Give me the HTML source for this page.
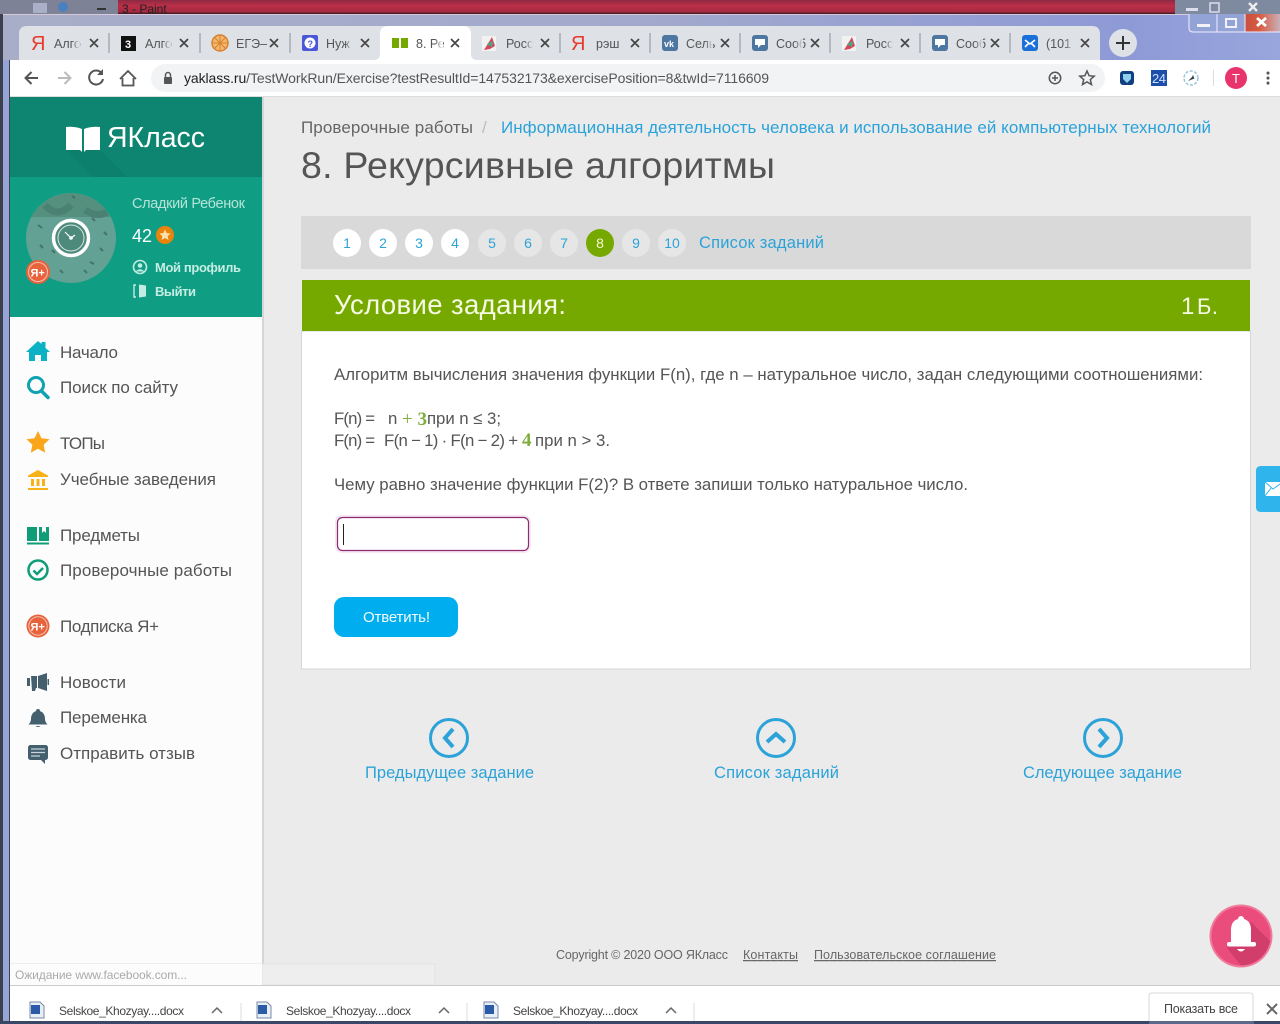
<!DOCTYPE html>
<html lang="ru"><head><meta charset="utf-8"><title>8. Рекурсивные алгоритмы</title>
<style>
html,body{margin:0;padding:0;width:1280px;height:1024px;overflow:hidden;background:#ebebeb}
svg{display:block}
text{font-family:"Liberation Sans","Noto Sans CJK JP",sans-serif}
.side{font-size:17px;fill:#555}
.body{font-size:16.800px;fill:#555}
.lnk{fill:#2ba3d9}
.tab{font-size:12.500px;fill:#555}
.x{stroke:#444;stroke-width:1.7;fill:none}
.step{font-size:14px;fill:#2ba3d9;text-anchor:middle}
.dl{font-size:12px;fill:#444}
</style></head><body>
<svg width="1280" height="1024" viewBox="0 0 1280 1024" xmlns="http://www.w3.org/2000/svg">
<defs>
<linearGradient id="top" x1="0" y1="0" x2="0" y2="1"><stop offset="0" stop-color="#8c2a42"/><stop offset=".4" stop-color="#bb2f48"/><stop offset=".85" stop-color="#a52a40"/><stop offset="1" stop-color="#2a1a20"/></linearGradient>
<linearGradient id="frame" x1="0" y1="0" x2="1" y2="0"><stop offset="0" stop-color="#a8aec8"/><stop offset=".5" stop-color="#a3a9cc"/><stop offset=".88" stop-color="#8e9ad6"/><stop offset="1" stop-color="#98a6dc"/></linearGradient>
<linearGradient id="red" x1="0" y1="0" x2="1" y2="0"><stop offset="0" stop-color="#c85040"/><stop offset=".4" stop-color="#d85a40"/><stop offset="1" stop-color="#c8b0b8"/></linearGradient>
<linearGradient id="fg" x1="0" y1="0" x2="1" y2="0"><stop offset="0" stop-color="#dee1e6" stop-opacity="0"/><stop offset="1" stop-color="#dee1e6"/></linearGradient>
<linearGradient id="fw" x1="0" y1="0" x2="1" y2="0"><stop offset="0" stop-color="#fff" stop-opacity="0"/><stop offset="1" stop-color="#fff"/></linearGradient>
<clipPath id="av"><circle cx="71" cy="238" r="45"/></clipPath>
<clipPath id="bb"><circle cx="1241" cy="936" r="29.500"/></clipPath>
</defs>

<!-- desktop strip -->
<rect width="1280" height="14" fill="url(#top)"/>
<rect width="118" height="14" fill="#7d8296"/>
<rect x="1175" width="105" height="14" fill="#7d8aa0"/>
<rect x="33" y="3" width="14" height="10" fill="#aab0c8"/>
<circle cx="63" cy="7" r="5" fill="#4a7fc0"/>
<rect x="97" y="8" width="9" height="2" fill="#333"/>
<text x="122" y="13" font-size="12" fill="#222">3 - Paint</text>
<rect x="1186" y="8" width="12" height="3" fill="#dde"/>
<rect x="1210" y="3" width="9" height="9" fill="none" stroke="#dde" stroke-width="1.5"/>
<path d="M1249 3l8 8M1257 3l-8 8" stroke="#eee" stroke-width="2.4"/>

<!-- window frame -->
<rect x="0" y="14" width="3" height="1010" fill="#3c3f4c"/>
<rect x="3" y="14" width="1277" height="46" fill="url(#frame)"/>
<rect x="3" y="14" width="1277" height="1" fill="#d8c8d8"/>
<rect x="3" y="60" width="7" height="964" fill="#97a5d6"/>
<rect x="9" y="60" width="1" height="964" fill="#3e4250"/>

<!-- window buttons -->
<rect x="1189" y="14" width="91" height="18" fill="#94a3d6"/>
<rect x="1245" y="14" width="35" height="18" fill="url(#red)"/>
<path d="M1189 14v14q0 4 4 4h87M1217 14v18M1245 14v18" stroke="#eef" stroke-width="1" fill="none"/>
<rect x="1197" y="24" width="13" height="3" fill="#f0f2f8"/>
<rect x="1226" y="19" width="10" height="8" fill="none" stroke="#f0f2f8" stroke-width="2"/>
<path d="M1257 18l9 8M1266 18l-9 8" stroke="#fff" stroke-width="2.8"/>

<!-- tabs -->
<path d="M19 60V34q0-8 8-8h1065q8 0 8 8v26z" fill="#dee1e6"/>
<path d="M109 33v20M200 33v20M290 33v20M560 33v20M650 33v20M740 33v20M830 33v20M920 33v20M1010 33v20" stroke="#8a8f98" stroke-width="1"/>
<path d="M374 60q6 0 6-6V34q0-8 8-8h75q8 0 8 8v20q0 6 6 6z" fill="#fff"/>
<circle cx="1123" cy="43" r="14" fill="#dee1e6"/>
<path d="M1123 36v14M1116 43h14" stroke="#333" stroke-width="2"/>

<!-- tab icons -->
<text x="31" y="50" font-size="20" fill="#e8392a">Я</text>
<rect x="121" y="36" width="15" height="15" fill="#111"/><text x="125" y="48" font-size="11" font-weight="bold" fill="#fff">3</text>
<circle cx="220" cy="43" r="8" fill="#f2b872" stroke="#d9822b" stroke-width="1.5"/><path d="M220 35v16M212 43h16M214 37l12 12M226 37l-12 12" stroke="#d9822b" stroke-width="1"/>
<rect x="302" y="35" width="16" height="16" rx="2" fill="#4b56d8"/><circle cx="310" cy="43" r="5.5" fill="#fff"/><text x="307.500" y="47" font-size="9" font-weight="bold" fill="#4b56d8">?</text>
<path d="M392 38h7v10h-7zM401 38h7v10h-7z" fill="#76a900"/>
<path d="M482 36h14v15h-14z" fill="#f2f2f2"/><path d="M484 50l8-13 3 9-5 3z" fill="#d24a5a"/><path d="M487 44l6-3-1 6z" fill="#4aa884"/>
<text x="571" y="50" font-size="20" fill="#e8392a">Я</text>
<rect x="662" y="35" width="16" height="16" rx="3" fill="#4d76a1"/><text x="664" y="47" font-size="9" font-weight="bold" fill="#fff">vk</text>
<rect x="752" y="35" width="16" height="16" rx="3" fill="#4d76a1"/><path d="M755 39h10v6h-4l-3 3v-3h-3z" fill="#fff"/>
<path d="M842 36h14v15h-14z" fill="#f2f2f2"/><path d="M844 50l8-13 3 9-5 3z" fill="#d24a5a"/><path d="M847 44l6-3-1 6z" fill="#4aa884"/>
<rect x="932" y="35" width="16" height="16" rx="3" fill="#4d76a1"/><path d="M935 39h10v6h-4l-3 3v-3h-3z" fill="#fff"/>
<rect x="1022" y="35" width="16" height="16" rx="3" fill="#1a6fd8"/><path d="M1025 40l5 4 5-4M1025 47l4-4M1035 47l-4-4" stroke="#fff" stroke-width="1.6" fill="none"/>

<!-- tab labels -->
<text class="tab" x="54" y="48">Алго</text>
<text class="tab" x="145" y="48">Алго</text>
<text class="tab" x="236" y="48">ЕГЭ–</text>
<text class="tab" x="326" y="48">Нуж</text>
<text class="tab" x="416" y="48">8. Ре</text>
<text class="tab" x="506" y="48">Росс</text>
<text class="tab" x="596" y="48">рэш</text>
<text class="tab" x="686" y="48">Сель</text>
<text class="tab" x="776" y="48">Сооб</text>
<text class="tab" x="866" y="48">Росс</text>
<text class="tab" x="956" y="48">Сооб</text>
<text class="tab" x="1046" y="48">(101</text>
<rect x="72" y="34" width="8" height="20" fill="url(#fg)"/>
<rect x="163" y="34" width="8" height="20" fill="url(#fg)"/>
<rect x="345" y="34" width="8" height="20" fill="url(#fg)"/>
<rect x="435" y="34" width="8" height="20" fill="url(#fw)"/>
<rect x="525" y="34" width="8" height="20" fill="url(#fg)"/>
<rect x="705" y="34" width="8" height="20" fill="url(#fg)"/>
<rect x="795" y="34" width="8" height="20" fill="url(#fg)"/>
<rect x="885" y="34" width="8" height="20" fill="url(#fg)"/>
<rect x="975" y="34" width="8" height="20" fill="url(#fg)"/>
<rect x="1065" y="34" width="8" height="20" fill="url(#fg)"/>
<path class="x" d="M90 39l8 8M98 39l-8 8M180 39l8 8M188 39l-8 8M270 39l8 8M278 39l-8 8M361 39l8 8M369 39l-8 8M451 39l8 8M459 39l-8 8M541 39l8 8M549 39l-8 8M631 39l8 8M639 39l-8 8M721 39l8 8M729 39l-8 8M811 39l8 8M819 39l-8 8M901 39l8 8M909 39l-8 8M991 39l8 8M999 39l-8 8M1081 39l8 8M1089 39l-8 8"/>

<!-- toolbar -->
<rect x="10" y="60" width="1270" height="37" fill="#fff"/>
<rect x="10" y="96" width="1270" height="1" fill="#ddd"/>
<path d="M38 78H26M31.500 72l-6 6 6 6" stroke="#555" stroke-width="2" fill="none"/>
<path d="M70 78H58M63.500 72l-6 6 6 6" stroke="#bbb" stroke-width="2" fill="none" transform="rotate(180 64 78)"/>
<path d="M101.500 73a7 7 0 1 0 1.500 6" stroke="#555" stroke-width="2" fill="none"/><path d="M103 69v6h-6z" fill="#555"/>
<path d="M120 79l8-8 8 8M122.500 78v7.500h11V78" stroke="#555" stroke-width="1.800" fill="none"/>
<rect x="151" y="64" width="954" height="28" rx="14" fill="#f1f3f4"/>
<rect x="164" y="77" width="8" height="7" rx="1" fill="#555"/><path d="M165.500 77v-2a2.500 2.500 0 0 1 5 0v2" stroke="#555" stroke-width="1.400" fill="none"/>
<text x="184" y="83" font-size="14" fill="#555" textLength="585"><tspan fill="#222">yaklass.ru</tspan>/TestWorkRun/Exercise?testResultId=147532173&amp;exercisePosition=8&amp;twId=7116609</text>
<circle cx="1055" cy="78" r="5.700" stroke="#555" stroke-width="1.500" fill="none"/><path d="M1055 75v6M1052 78h6" stroke="#555" stroke-width="1.500"/>
<path d="M1087 71l2.100 4.700 5.100.5-3.900 3.400 1.200 5-4.500-2.700-4.500 2.700 1.200-5-3.900-3.400 5.100-.5z" stroke="#555" stroke-width="1.500" fill="none"/>
<rect x="1120" y="71" width="14" height="14" rx="3" fill="#123f80"/><path d="M1123 74h8v5l-4 4-4-4z" fill="#8fd0f0"/>
<rect x="1151" y="70" width="16" height="16" fill="#1b4faa"/><text x="1152" y="83" font-size="13" fill="#cfe0ff" textLength="14">24</text>
<circle cx="1191" cy="78" r="7" stroke="#9cc4dc" stroke-width="1.500" stroke-dasharray="3 1.500" fill="none"/><path d="M1188 81l4-4 1-2 1.500 3.500z" fill="#345"/>
<rect x="1213" y="70" width="1" height="16" fill="#ddd"/>
<circle cx="1236" cy="78" r="11" fill="#e8336d"/><text x="1236" y="83" font-size="13" fill="#fff" text-anchor="middle">T</text>
<path d="M1268 73v.1M1268 78v.1M1268 83v.1" stroke="#555" stroke-width="3" stroke-linecap="round"/>

<!-- page -->
<rect x="10" y="97" width="1270" height="888" fill="#ebebeb"/>
<rect x="10" y="97" width="252" height="888" fill="#fcfcfd"/>
<rect x="262" y="97" width="2" height="888" fill="#d6d6d6"/>
<rect x="10" y="97" width="252" height="80" fill="#0e8571"/>
<path d="M66 150h34l27 27H93z" fill="#0c7a68" opacity=".45"/>
<rect x="10" y="177" width="252" height="140" fill="#0f9e84"/>

<!-- logo -->
<path d="M66 127q9-1 16 2v23l-2-2H66zM100 127q-9-1-16 2v23l2-2h14z" fill="#fff"/>
<text x="107" y="147" font-size="28.500" fill="#fff" textLength="98">ЯКласс</text>

<!-- avatar -->
<circle cx="71" cy="238" r="45" fill="#62a193"/>
<g clip-path="url(#av)">
<rect x="26" y="193" width="90" height="24" fill="#55907f"/>
<path d="M45 205q12 14 26 0M85 210q12 8 22 2" stroke="#4a8172" stroke-width="7" fill="none"/>
<path d="M38 225l4 3M52 250l3 3M92 218l3 3M100 248l3 3M84 270l3 3M60 270l3 3M40 245l3 3M104 232l3 3M90 262l4 2M72 196l3 2" stroke="#3f6a60" stroke-width="2" opacity=".8"/>
</g>
<circle cx="71" cy="238" r="17.500" fill="#4e8a7c" stroke="#fff" stroke-width="3.500"/>
<circle cx="71" cy="238" r="13" fill="none" stroke="#d6e8e2" stroke-width="1"/>
<path d="M71 238l-6-6M71 238l4-3" stroke="#fff" stroke-width="1.200"/><circle cx="71" cy="238" r="1.800" fill="#fff"/>
<circle cx="38" cy="272" r="12" fill="#e8623c"/><circle cx="38" cy="272" r="9.500" fill="none" stroke="#f4c0ac" stroke-width="1"/>
<text x="30.500" y="276.500" font-size="11" font-weight="bold" fill="#fff">Я+</text>

<text x="132" y="208" font-size="14.500" fill="#b5e3d8" textLength="113">Сладкий Ребенок</text>
<text x="132" y="242" font-size="18" fill="#fff" textLength="20">42</text>
<circle cx="165" cy="235" r="9" fill="#e8830c"/>
<path d="M165 229.500l1.700 3.600 3.900.4-2.900 2.600.8 3.900-3.500-2-3.500 2 .8-3.900-2.900-2.600 3.900-.4z" fill="#fde0a8"/>
<circle cx="140" cy="267" r="6.500" fill="none" stroke="#c4ece2" stroke-width="1.600"/><circle cx="140" cy="265.500" r="2.300" fill="#c4ece2"/><path d="M135.500 271.500q4.500-4.500 9 0z" fill="#c4ece2"/>
<path d="M136 285h-2v12h2" stroke="#c4ece2" stroke-width="1.400" fill="none"/><path d="M139 284.500l7 1v11l-7 1z" fill="#c4ece2"/>
<text x="155" y="272" font-size="13" font-weight="bold" fill="#c4ece2" textLength="86">Мой профиль</text>
<text x="155" y="296" font-size="13" font-weight="bold" fill="#c4ece2" textLength="41">Выйти</text>

<!-- sidebar icons -->
<path d="M26 352l12-11 3.500 3v-2h4v6l4.500 4h-3v9h-6v-6h-6v6h-6v-9z" fill="#0cb2c4"/>
<circle cx="36" cy="385" r="7.500" fill="none" stroke="#0fa2b0" stroke-width="3"/><path d="M41.500 391l6.500 6.500" stroke="#0fa2b0" stroke-width="3.500" stroke-linecap="round"/>
<path d="M38 431l3.500 7.300 8 1-5.900 5.500 1.600 8-7.200-4-7.200 4 1.600-8-5.900-5.500 8-1z" fill="#faa61a"/>
<path d="M28 475.500l10-5.500 10 5.500v1.500H28zM31 479h3v7h-3zM36.500 479h3v7h-3zM42 479h3v7h-3zM28 488h20v2H28z" fill="#f7b21a"/>
<path d="M27 527h10v14h-10zM39 527h3v6l2-2 2 2v-6h3v14H39z" fill="#0f9d78"/><path d="M27 542.500h22v2H27z" fill="#0f9d78"/>
<circle cx="38" cy="570" r="9.500" fill="none" stroke="#0f9d78" stroke-width="2.500"/><path d="M33.500 570.500l3.500 3.500 6-6" stroke="#0f9d78" stroke-width="2.500" fill="none"/>
<circle cx="38" cy="626" r="11.500" fill="#e8623c"/><circle cx="38" cy="626" r="9.200" fill="none" stroke="#f4c0ac" stroke-width="1"/>
<text x="30.500" y="630.500" font-size="11" font-weight="bold" fill="#fff">Я+</text>
<path d="M27 678h3v8h-3zM31 676h6v12h-1l-1 3h-3zM38 676l9-3v18l-9-3zM47.500 679h1.500v6h-1.500z" fill="#44606f"/>
<path d="M38 709a2 2 0 0 1 2 2q5 2 5 8 0 3 2.500 5.500H28.500Q31 722 31 719q0-6 5-8a2 2 0 0 1 2-2zM35.500 726h5q-2.500 2-5 0z" fill="#44606f"/>
<rect x="28" y="745" width="20" height="15" rx="2.500" fill="#44606f"/><path d="M41 760h4v4z" fill="#44606f"/><path d="M31 749h14M31 752.500h14M31 756h9" stroke="#c8d2d8" stroke-width="1.200"/>

<!-- sidebar labels -->
<text class="side" x="60" y="358" textLength="58">Начало</text>
<text class="side" x="60" y="393" textLength="118">Поиск по сайту</text>
<text class="side" x="60" y="449" textLength="45">ТОПы</text>
<text class="side" x="60" y="485" textLength="156">Учебные заведения</text>
<text class="side" x="60" y="541" textLength="80">Предметы</text>
<text class="side" x="60" y="576" textLength="172">Проверочные работы</text>
<text class="side" x="60" y="632" textLength="99">Подписка Я+</text>
<text class="side" x="60" y="688" textLength="66">Новости</text>
<text class="side" x="60" y="723" textLength="87">Переменка</text>
<text class="side" x="60" y="759" textLength="135">Отправить отзыв</text>

<!-- heading -->
<text x="301" y="133" font-size="17" fill="#666" textLength="172">Проверочные работы</text>
<text x="482" y="133" font-size="17" fill="#bbb">/</text>
<text class="lnk" x="501" y="133" font-size="17" textLength="710">Информационная деятельность человека и использование ей компьютерных технологий</text>
<text x="301" y="178" font-size="37.500" fill="#555" textLength="474">8. Рекурсивные алгоритмы</text>

<!-- stepper -->
<rect x="301" y="216" width="950" height="53" fill="#d9d9d9"/>
<g fill="#fff"><circle cx="347" cy="243" r="14"/><circle cx="383" cy="243" r="14"/><circle cx="419" cy="243" r="14"/><circle cx="455" cy="243" r="14"/></g>
<g fill="#e6e6e6"><circle cx="492" cy="243" r="14"/><circle cx="528" cy="243" r="14"/><circle cx="564" cy="243" r="14"/><circle cx="636" cy="243" r="14"/><circle cx="672" cy="243" r="14"/></g>
<circle cx="600" cy="243" r="14" fill="#76a900"/>
<text class="step" x="347" y="248">1</text><text class="step" x="383" y="248">2</text><text class="step" x="419" y="248">3</text><text class="step" x="455" y="248">4</text><text class="step" x="492" y="248">5</text><text class="step" x="528" y="248">6</text><text class="step" x="564" y="248">7</text>
<text class="step" x="600" y="248" style="fill:#f4f8d0">8</text>
<text class="step" x="636" y="248">9</text><text class="step" x="672" y="248">10</text>
<text class="lnk" x="699" y="248" font-size="16.500" textLength="125">Список заданий</text>

<!-- panel -->
<rect x="301.500" y="331" width="949" height="338" fill="#fff" stroke="#d6d6d6"/>
<rect x="302" y="280" width="948" height="51" fill="#76a900"/>
<text x="334" y="314" font-size="27.500" fill="#f6fae4" textLength="232">Условие задания:</text>
<text x="1181" y="314" font-size="24" fill="#f6fae4">1</text>
<text x="1197" y="314" font-size="22" fill="#f6fae4" textLength="21">Б.</text>

<text class="body" x="334" y="380" textLength="869">Алгоритм вычисления значения функции F(n), где n – натуральное число, задан следующими соотношениями:</text>
<text class="body" x="334" y="424" textLength="41">F(n) =</text>
<text class="body" x="388" y="424">n</text>
<text x="402" y="425" font-size="19" fill="#7cae3c" style="font-family:'Liberation Serif',serif" textLength="25"><tspan>+</tspan><tspan font-weight="bold">3</tspan></text>
<text class="body" x="427" y="424" textLength="74">при n ≤ 3;</text>
<text class="body" x="334" y="446" textLength="41">F(n) =</text>
<text class="body" x="384" y="446" textLength="134">F(n − 1) · F(n − 2) +</text>
<text x="522" y="446" font-size="19" font-weight="bold" fill="#7cae3c" style="font-family:'Liberation Serif',serif">4</text>
<text class="body" x="535" y="446" textLength="75">при n &gt; 3.</text>
<text class="body" x="334" y="490" textLength="634">Чему равно значение функции F(2)? В ответе запиши только натуральное число.</text>

<rect x="336" y="516" width="194" height="36" rx="6" fill="none" stroke="#f7e8f3" stroke-width="2"/>
<rect x="337.500" y="517.500" width="191" height="33" rx="5" fill="#fff" stroke="#8d2a72" stroke-width="1.200"/>
<rect x="343" y="524" width="1" height="21" fill="#222"/>

<rect x="334" y="597" width="124" height="40" rx="10" fill="#00aeef"/>
<text x="363" y="622" font-size="15" fill="#f4fbff" textLength="67">Ответить!</text>

<!-- nav -->
<g fill="none" stroke="#2ba3d9" stroke-width="3">
<circle cx="449" cy="738" r="18.500"/><circle cx="776" cy="738" r="18.500"/><circle cx="1103" cy="738" r="18.500"/>
<path stroke-width="4" d="M453 729l-8 9 8 9M767 742l9-8 9 8M1099 729l8 9-8 9"/>
</g>
<text class="lnk" x="365" y="778" font-size="16.500" textLength="169">Предыдущее задание</text>
<text class="lnk" x="714" y="778" font-size="16.500" textLength="125">Список заданий</text>
<text class="lnk" x="1023" y="778" font-size="16.500" textLength="159">Следующее задание</text>

<!-- footer -->
<text x="556" y="959" font-size="12.500" fill="#666" textLength="172">Copyright © 2020 ООО ЯКласс</text>
<text x="743" y="959" font-size="12.500" fill="#666" textLength="55" text-decoration="underline">Контакты</text>
<text x="814" y="959" font-size="12.500" fill="#666" textLength="182" text-decoration="underline">Пользовательское соглашение</text>

<!-- side mail -->
<path d="M1280 466h-19q-5 0-5 5v36q0 5 5 5h19z" fill="#2fb4ec"/>
<path d="M1265 482h15v14h-15z" fill="#fff"/><path d="M1265 482l8 7 7-5M1265 496l6-8" stroke="#2fb4ec" stroke-width="1" fill="none"/>

<!-- bell bubble -->
<circle cx="1241" cy="936" r="31.500" fill="#f07a9c"/>
<circle cx="1241" cy="936" r="29.500" fill="#ea4c7c"/>
<path clip-path="url(#bb)" d="M1251 922l22 22-12 24h-18l-16-20z" fill="#c93a66" opacity=".75"/>
<path d="M1241 916a3 3 0 0 1 3 3q7 2 7 11v12h-20v-12q0-9 7-11a3 3 0 0 1 3-3z" fill="#fff"/>
<rect x="1227" y="942" width="29" height="4.500" rx="2" fill="#fff"/>
<path d="M1237 949h8q-4 5-8 0z" fill="#fff"/>

<!-- status bubble -->
<rect x="262" y="964" width="173" height="21" fill="#eeeeee" stroke="#e2e2e2"/>
<rect x="10" y="964" width="252" height="21" fill="#fcfcfd"/>
<rect x="10" y="963" width="252" height="1" fill="#eee"/>
<text x="15" y="979" font-size="12" fill="#aaa" textLength="172">Ожидание www.facebook.com...</text>

<!-- download bar -->
<rect x="10" y="985" width="1270" height="39" fill="#fff"/>
<rect x="10" y="985" width="1270" height="1" fill="#ccc"/>
<path d="M241 1003v18M467 1003v18M694 1003v18" stroke="#ddd"/>
<path d="M30 1002h10l4 4v12H30z" fill="#e8eef8" stroke="#7a8aa0"/><rect x="31" y="1005" width="9" height="9" fill="#2a5aa8"/>
<path d="M257 1002h10l4 4v12h-14z" fill="#e8eef8" stroke="#7a8aa0"/><rect x="258" y="1005" width="9" height="9" fill="#2a5aa8"/>
<path d="M484 1002h10l4 4v12h-14z" fill="#e8eef8" stroke="#7a8aa0"/><rect x="485" y="1005" width="9" height="9" fill="#2a5aa8"/>
<text class="dl" x="59" y="1015" textLength="125">Selskoe_Khozyay....docx</text>
<text class="dl" x="286" y="1015" textLength="125">Selskoe_Khozyay....docx</text>
<text class="dl" x="513" y="1015" textLength="125">Selskoe_Khozyay....docx</text>
<path d="M212 1013l5-5 5 5M439 1013l5-5 5 5M666 1013l5-5 5 5" stroke="#666" stroke-width="1.500" fill="none"/>
<path d="M1149 1024v-28q0-3 3-3h98q3 0 3 3v28" fill="#fff" stroke="#d8d8d8"/>
<text x="1164" y="1013" font-size="12.500" fill="#444" textLength="74">Показать все</text>
<path d="M1267 1004l10 10M1277 1004l-10 10" stroke="#666" stroke-width="2"/>
<rect x="0" y="1021" width="1280" height="3" fill="#3a4868"/>
<rect x="1149" y="1021" width="105" height="3" fill="#5a6a88"/>
</svg>
</body></html>
